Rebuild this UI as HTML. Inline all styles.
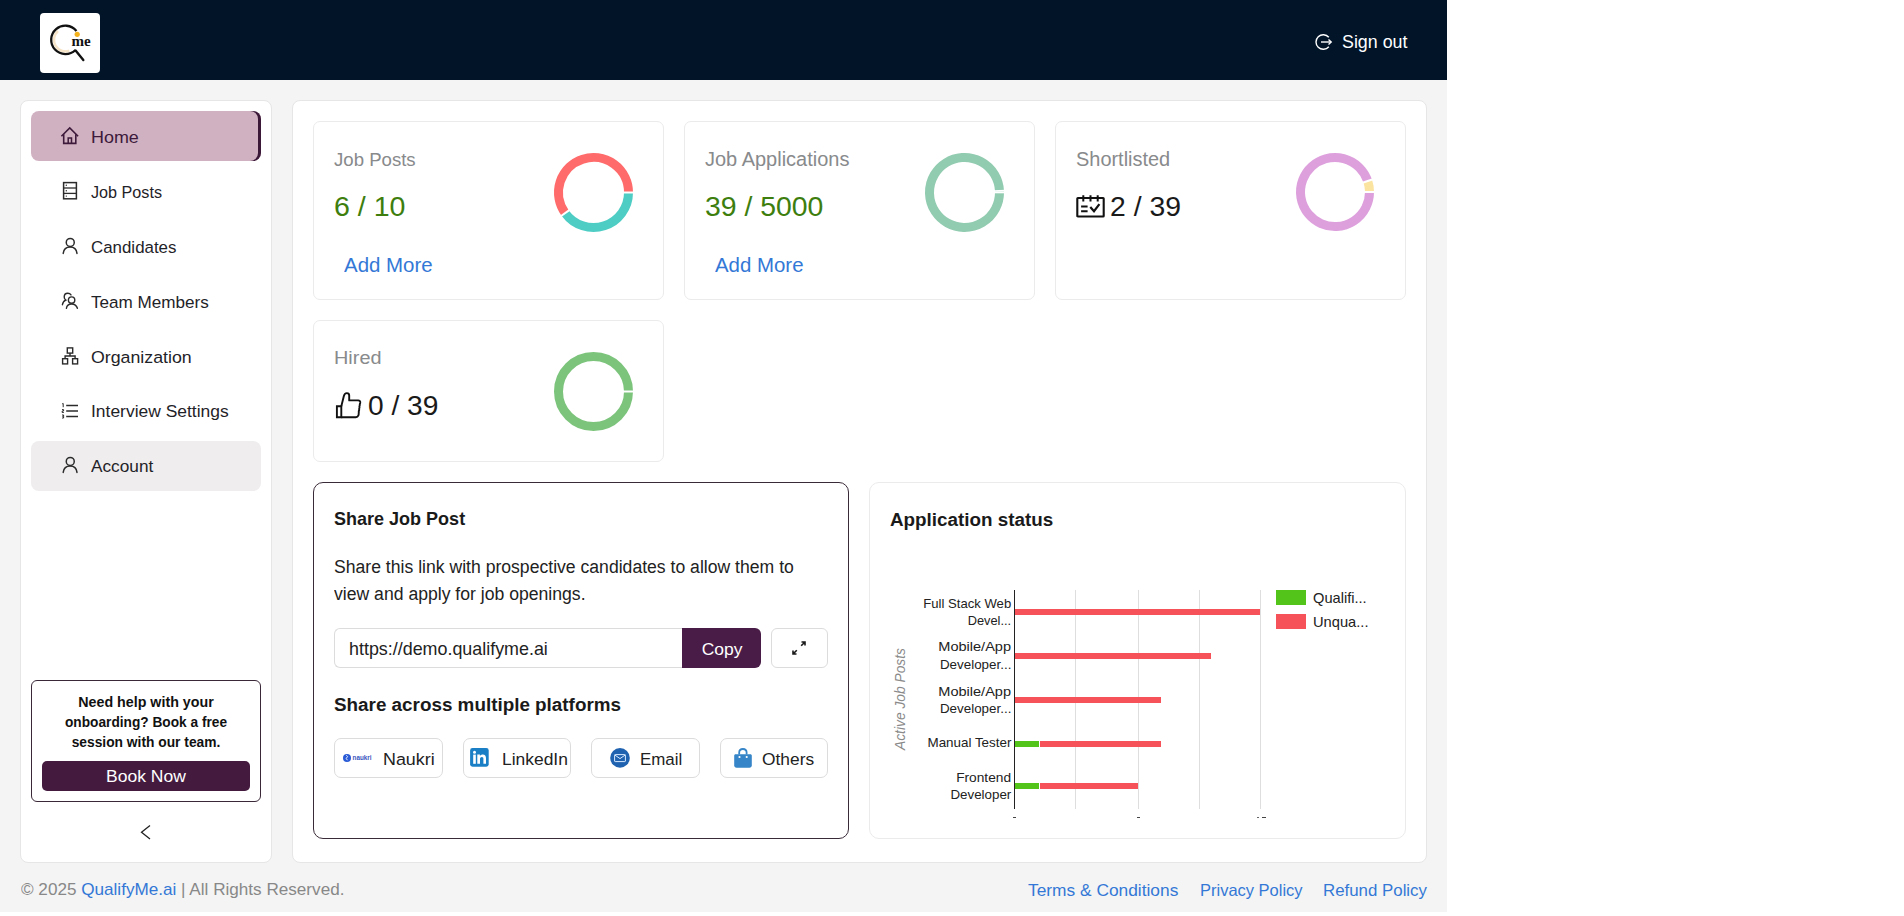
<!DOCTYPE html>
<html><head><meta charset="utf-8"><title>QualifyMe Dashboard</title>
<style>
html,body{margin:0;padding:0;background:#fff;}
body{width:1904px;height:916px;position:relative;overflow:hidden;font-family:"Liberation Sans", sans-serif;}
.r{position:absolute;display:block;}
.t{position:absolute;white-space:nowrap;font-family:"Liberation Sans", sans-serif;}
</style></head><body>
<div class="r" style="left:0px;top:0px;width:1447px;height:912px;background:#f4f4f4;"></div>
<div class="r" style="left:0px;top:0px;width:1447px;height:80px;background:#011428;"></div>
<div class="r" style="left:40px;top:13px;width:60px;height:60px;background:#fff;border-radius:4px;"></div>
<svg class="r" style="left:40px;top:13px;" width="60" height="60" viewBox="0 0 60 60">
<path d="M18 18.1 A11.5 11.5 0 0 0 29.3 37.7" fill="none" stroke="#f5e4c8" stroke-width="2.6"/>
<path d="M36.44 17.96 A14.2 14.2 0 1 0 35.44 36.94" fill="none" stroke="#111" stroke-width="2.3"/>
<line x1="35.6" y1="37.6" x2="43.3" y2="47" stroke="#111" stroke-width="2.4" stroke-linecap="round"/>
<circle cx="37.2" cy="21.3" r="2.6" fill="#f5b21a"/>
<text x="31.6" y="33" font-family="Liberation Serif" font-weight="700" font-size="14.5" fill="#111" textLength="19.2" lengthAdjust="spacingAndGlyphs">me</text>
</svg>
<svg class="r" style="left:1314px;top:32px;" width="20" height="20" viewBox="0 0 20 20">
<path d="M14.8 5.2 A7.3 7.3 0 1 0 14.8 14.8" fill="none" stroke="#fff" stroke-width="1.4"/>
<line x1="7" y1="10" x2="17" y2="10" stroke="#fff" stroke-width="1.4"/>
<path d="M14.5 7.6 L17.2 10 L14.5 12.4" fill="none" stroke="#fff" stroke-width="1.4"/>
</svg>
<div class="t" style="left:1342.3px;top:30.64px;font-size:17.5px;line-height:22px;color:#fff;font-weight:400;font-style:normal;transform:scaleX(1.0190);transform-origin:left center;">Sign out</div>
<div class="r" style="left:20px;top:100px;width:252px;height:763px;background:#fff;border:1px solid #e6e6e6;box-sizing:border-box;border-radius:8px;"></div>
<div class="r" style="left:31px;top:111px;width:230px;height:50px;background:#d0b1c1;border-radius:8px;box-shadow:inset -3px 0 0 #3b1838;"></div>
<div class="r" style="left:31px;top:441px;width:230px;height:50px;background:#efedee;border-radius:8px;"></div>
<svg class="r" style="left:60px;top:126px;" width="20" height="20" viewBox="0 0 20 20">
<path d="M1.4 10.2 L9.75 1.9 L18.1 10.2" fill="none" stroke="#3d1a3b" stroke-width="1.6" stroke-linejoin="miter"/>
<path d="M3.7 8.2 V17.4 H15.8 V8.2" fill="none" stroke="#3d1a3b" stroke-width="1.6"/>
<path d="M8.2 17.4 V12.1 H11.5 V17.4" fill="none" stroke="#3d1a3b" stroke-width="1.5"/>
</svg>
<div class="t" style="left:91px;top:125.84px;font-size:17.2px;line-height:22px;color:#3d1a3b;font-weight:400;font-style:normal;transform:scaleX(1.0432);transform-origin:left center;">Home</div>
<svg class="r" style="left:60px;top:180px;" width="20" height="22" viewBox="0 0 20 22">
<rect x="3.6" y="2.6" width="12.8" height="16.2" fill="none" stroke="#2b2b2b" stroke-width="1.5"/>
<line x1="3.6" y1="8" x2="16.4" y2="8" stroke="#2b2b2b" stroke-width="1.3"/>
<line x1="3.6" y1="13.4" x2="16.4" y2="13.4" stroke="#2b2b2b" stroke-width="1.3"/>
<circle cx="6.3" cy="5.3" r="0.7" fill="#2b2b2b"/><circle cx="6.3" cy="10.7" r="0.7" fill="#2b2b2b"/><circle cx="6.3" cy="16.1" r="0.7" fill="#2b2b2b"/>
</svg>
<div class="t" style="left:91px;top:180.84px;font-size:17.2px;line-height:22px;color:#1f2328;font-weight:400;font-style:normal;transform:scaleX(0.9413);transform-origin:left center;">Job Posts</div>
<svg class="r" style="left:59.5px;top:237px;" width="20" height="20" viewBox="0 0 20 20">
<circle cx="10.25" cy="5.45" r="4" fill="none" stroke="#2b2b2b" stroke-width="1.5"/>
<path d="M3.2 16.4 C3.7 12.2 6.3 10.1 10.2 10.1 C14.1 10.1 16.5 12.2 17 16.4" fill="none" stroke="#2b2b2b" stroke-width="1.5" stroke-linecap="round"/>
</svg>
<div class="t" style="left:91px;top:235.84px;font-size:17.2px;line-height:22px;color:#1f2328;font-weight:400;font-style:normal;transform:scaleX(0.9826);transform-origin:left center;">Candidates</div>
<svg class="r" style="left:59px;top:291px;" width="20" height="20" viewBox="0 0 20 20">
<path d="M12 3.9 C11.2 2.7 10 2.3 8.8 2.3 C6.6 2.3 5.2 3.9 5.2 5.9 C5.2 7.3 5.8 8.3 6.8 9 C5 9.7 3.8 11.6 3.4 13.7" fill="none" stroke="#2b2b2b" stroke-width="1.4" stroke-linecap="round"/>
<circle cx="12.6" cy="9.1" r="3.2" fill="#fff" stroke="#2b2b2b" stroke-width="1.4"/>
<path d="M7.4 17.3 C7.8 14.6 9.6 13 12.6 13 C15.6 13 17.6 14.6 18.4 17.3" fill="none" stroke="#2b2b2b" stroke-width="1.4" stroke-linecap="round"/>
</svg>
<div class="t" style="left:91px;top:290.64px;font-size:17.2px;line-height:22px;color:#1f2328;font-weight:400;font-style:normal;transform:scaleX(0.9949);transform-origin:left center;">Team Members</div>
<svg class="r" style="left:60px;top:346px;" width="20" height="20" viewBox="0 0 20 20">
<rect x="7.3" y="1.9" width="5.4" height="5.2" fill="none" stroke="#2b2b2b" stroke-width="1.4"/>
<path d="M10 7.1 V10 M5.1 12.7 V10 H15.1 V12.7" fill="none" stroke="#2b2b2b" stroke-width="1.4"/>
<rect x="2.6" y="12.7" width="5" height="5.2" fill="none" stroke="#2b2b2b" stroke-width="1.4"/>
<rect x="12.6" y="12.7" width="5" height="5.2" fill="none" stroke="#2b2b2b" stroke-width="1.4"/>
</svg>
<div class="t" style="left:91px;top:345.64px;font-size:17.2px;line-height:22px;color:#1f2328;font-weight:400;font-style:normal;transform:scaleX(1.0333);transform-origin:left center;">Organization</div>
<svg class="r" style="left:60px;top:401px;" width="20" height="20" viewBox="0 0 20 20">
<line x1="6.2" y1="4.5" x2="18" y2="4.5" stroke="#2b2b2b" stroke-width="1.5"/>
<line x1="6.2" y1="10" x2="18" y2="10" stroke="#2b2b2b" stroke-width="1.5"/>
<line x1="6.2" y1="15.5" x2="18" y2="15.5" stroke="#2b2b2b" stroke-width="1.5"/>
<path d="M2.2 2.8 L3.2 2.5 V6.2" fill="none" stroke="#2b2b2b" stroke-width="1"/>
<path d="M2 8.6 H3.6 V10 H2.2 V11.5 H3.8" fill="none" stroke="#2b2b2b" stroke-width="1"/>
<path d="M2 14 H3.6 V15.4 H2.4 M3.6 15.4 V17 H2" fill="none" stroke="#2b2b2b" stroke-width="1"/>
</svg>
<div class="t" style="left:91px;top:400.34px;font-size:17.2px;line-height:22px;color:#1f2328;font-weight:400;font-style:normal;transform:scaleX(1.0149);transform-origin:left center;">Interview Settings</div>
<svg class="r" style="left:59.5px;top:456px;" width="20" height="20" viewBox="0 0 20 20">
<circle cx="10.25" cy="5.45" r="4" fill="none" stroke="#2b2b2b" stroke-width="1.5"/>
<path d="M3.2 16.4 C3.7 12.2 6.3 10.1 10.2 10.1 C14.1 10.1 16.5 12.2 17 16.4" fill="none" stroke="#2b2b2b" stroke-width="1.5" stroke-linecap="round"/>
</svg>
<div class="t" style="left:91px;top:455.24px;font-size:17.2px;line-height:22px;color:#1f2328;font-weight:400;font-style:normal;transform:scaleX(1.0032);transform-origin:left center;">Account</div>
<div class="r" style="left:31px;top:680px;width:230px;height:122px;border:1px solid #3a2838;box-sizing:border-box;border-radius:6px;"></div>
<div class="t" style="left:-154px;width:600px;text-align:center;top:693.08px;font-size:14.2px;line-height:18px;color:#111;font-weight:700;font-style:normal;transform:scaleX(1.0052);transform-origin:center center;">Need help with your</div>
<div class="t" style="left:-154px;width:600px;text-align:center;top:713.08px;font-size:14.2px;line-height:18px;color:#111;font-weight:700;font-style:normal;transform:scaleX(0.9649);transform-origin:center center;">onboarding? Book a free</div>
<div class="t" style="left:-154px;width:600px;text-align:center;top:733.08px;font-size:14.2px;line-height:18px;color:#111;font-weight:700;font-style:normal;transform:scaleX(0.9724);transform-origin:center center;">session with our team.</div>
<div class="r" style="left:42px;top:761px;width:208px;height:30px;background:#441b3f;border-radius:5px;"></div>
<div class="t" style="left:-154px;width:600px;text-align:center;top:765.37px;font-size:17.4px;line-height:22px;color:#fff;font-weight:400;font-style:normal;transform:scaleX(1.0076);transform-origin:center center;">Book Now</div>
<svg class="r" style="left:138px;top:824px;" width="16" height="17" viewBox="0 0 16 17"><path d="M12 1.5 L3.5 8.2 L12 15" fill="none" stroke="#222" stroke-width="1.3"/></svg>
<div class="r" style="left:292px;top:100px;width:1135px;height:763px;background:#fff;border:1px solid #e6e6e6;box-sizing:border-box;border-radius:8px;"></div>
<div class="r" style="left:313px;top:121px;width:351px;height:179px;background:#fff;border:1px solid #ebebeb;box-sizing:border-box;border-radius:7px;"></div>
<div class="r" style="left:684px;top:121px;width:351px;height:179px;background:#fff;border:1px solid #ebebeb;box-sizing:border-box;border-radius:7px;"></div>
<div class="r" style="left:1055px;top:121px;width:351px;height:179px;background:#fff;border:1px solid #ebebeb;box-sizing:border-box;border-radius:7px;"></div>
<div class="r" style="left:313px;top:320px;width:351px;height:142px;background:#fff;border:1px solid #ebebeb;box-sizing:border-box;border-radius:7px;"></div>
<div class="t" style="left:334px;top:147.76px;font-size:18.6px;line-height:23px;color:#888a8c;font-weight:400;font-style:normal;transform:scaleX(1.0000);transform-origin:left center;">Job Posts</div>
<div class="t" style="left:334px;top:189.64px;font-size:27.6px;line-height:34px;color:#3d7e0e;font-weight:400;font-style:normal;transform:scaleX(1.0358);transform-origin:left center;">6 / 10</div>
<div class="t" style="left:344px;top:252.51px;font-size:19.6px;line-height:24px;color:#3378d6;font-weight:400;font-style:normal;transform:scaleX(1.0429);transform-origin:left center;">Add More</div>
<svg class="r" style="left:551.5px;top:150.5px;" width="83.0" height="83.0" viewBox="0 0 83.0 83.0"><path d="M76.50 41.50 A35.0 35.0 0 0 1 13.18 62.07" fill="none" stroke="#4ecdc4" stroke-width="9.0"/><path d="M13.18 62.07 A35.0 35.0 0 1 1 76.50 41.50" fill="none" stroke="#ff6b6b" stroke-width="9.0"/><line x1="71.00" y1="41.50" x2="82.00" y2="41.50" stroke="#fff" stroke-width="2"/><line x1="17.63" y1="58.84" x2="8.73" y2="65.31" stroke="#fff" stroke-width="2"/></svg>
<div class="t" style="left:705px;top:146.91px;font-size:19.6px;line-height:24px;color:#888a8c;font-weight:400;font-style:normal;transform:scaleX(1.0199);transform-origin:left center;">Job Applications</div>
<div class="t" style="left:705px;top:189.07px;font-size:27.8px;line-height:35px;color:#3d7e0e;font-weight:400;font-style:normal;transform:scaleX(1.0211);transform-origin:left center;">39 / 5000</div>
<div class="t" style="left:715px;top:252.51px;font-size:19.6px;line-height:24px;color:#3378d6;font-weight:400;font-style:normal;transform:scaleX(1.0417);transform-origin:left center;">Add More</div>
<svg class="r" style="left:922.5px;top:150.5px;" width="83.0" height="83.0" viewBox="0 0 83.0 83.0"><path d="M76.50 41.50 A35.0 35.0 0 1 1 76.46 39.79" fill="none" stroke="#91cbb0" stroke-width="9.0"/><path d="M76.46 39.79 A35.0 35.0 0 0 1 76.50 41.50" fill="none" stroke="#c9e8da" stroke-width="9.0"/><line x1="71.00" y1="41.50" x2="82.00" y2="41.50" stroke="#fff" stroke-width="1.6"/><line x1="70.96" y1="40.06" x2="81.95" y2="39.52" stroke="#fff" stroke-width="1.6"/></svg>
<div class="t" style="left:1076px;top:146.98px;font-size:19.4px;line-height:24px;color:#888a8c;font-weight:400;font-style:normal;transform:scaleX(1.0278);transform-origin:left center;">Shortlisted</div>
<svg class="r" style="left:1075px;top:194px;" width="31" height="25" viewBox="0 0 31 25">
<rect x="2.3" y="4" width="26.4" height="18.5" rx="0.6" fill="none" stroke="#111" stroke-width="2.1"/>
<path d="M8.3 1.3 V7.4 M15.5 1.3 V7.4 M22.7 1.3 V7.4" stroke="#111" stroke-width="2"/>
<path d="M6.1 12.6 H12.6 M6.1 17.2 H12.6" stroke="#111" stroke-width="2"/>
<path d="M15.3 13 L19 17.2 L24.4 10.2" fill="none" stroke="#111" stroke-width="2.2"/>
</svg>
<div class="t" style="left:1110px;top:189.54px;font-size:27.6px;line-height:34px;color:#1a1a1a;font-weight:400;font-style:normal;transform:scaleX(1.0269);transform-origin:left center;">2 / 39</div>
<svg class="r" style="left:1293.8px;top:150.6px;" width="82" height="82" viewBox="0 0 82 82"><path d="M75.50 41.00 A34.5 34.5 0 1 1 73.72 30.05" fill="none" stroke="#dda0dd" stroke-width="9"/><path d="M73.72 30.05 A34.5 34.5 0 0 1 75.50 41.00" fill="none" stroke="#fbe3a0" stroke-width="9"/><line x1="70.00" y1="41.00" x2="81.00" y2="41.00" stroke="#fff" stroke-width="2"/><line x1="68.50" y1="31.80" x2="78.93" y2="28.31" stroke="#fff" stroke-width="2"/></svg>
<div class="t" style="left:334px;top:346.15px;font-size:19.2px;line-height:24px;color:#888a8c;font-weight:400;font-style:normal;transform:scaleX(1.0364);transform-origin:left center;">Hired</div>
<svg class="r" style="left:334px;top:391px;" width="28" height="29" viewBox="0 0 28 29">
<path d="M2.9 15.3 H7.3 V26.2 H2.9 Z" fill="none" stroke="#111" stroke-width="1.9"/>
<path d="M7.3 15.3 L9.8 5.2 C10.3 3 11.5 2.1 12.9 2.1 C14.3 2.1 15.2 3.1 15.2 4.6 V9.4 H24.2 C25.6 9.4 26.6 10.5 26.2 12 C25.9 13 25.6 13.3 25.8 14.2 C25.4 15 25.2 15.6 25.5 16.6 C25.1 17.4 25 18 25.2 19 C24.8 19.8 24.6 20.5 24.8 21.4 C24.6 22.5 24.8 23.6 24.4 24.4 C23.9 25.6 23.1 26.2 21.8 26.2 H7.3" fill="none" stroke="#111" stroke-width="1.9" stroke-linejoin="round"/>
</svg>
<div class="t" style="left:368px;top:389.04px;font-size:27.6px;line-height:34px;color:#1a1a1a;font-weight:400;font-style:normal;transform:scaleX(1.0194);transform-origin:left center;">0 / 39</div>
<svg class="r" style="left:551.5px;top:349.5px;" width="83.0" height="83.0" viewBox="0 0 83.0 83.0"><circle cx="41.5" cy="41.5" r="35.0" fill="none" stroke="#7cc47c" stroke-width="9.0"/><line x1="71.00" y1="41.50" x2="82.00" y2="41.50" stroke="#fff" stroke-width="2"/></svg>
<div class="r" style="left:313px;top:482px;width:536px;height:357px;background:#fff;border:1px solid #3a2b38;box-sizing:border-box;border-radius:10px;"></div>
<div class="t" style="left:334px;top:507.83px;font-size:18.1px;line-height:23px;color:#1a1a1a;font-weight:700;font-style:normal;transform:scaleX(0.9955);transform-origin:left center;">Share Job Post</div>
<div class="t" style="left:334px;top:556.40px;font-size:17.6px;line-height:22px;color:#222;font-weight:400;font-style:normal;transform:scaleX(1.0004);transform-origin:left center;">Share this link with prospective candidates to allow them to</div>
<div class="t" style="left:334px;top:583.30px;font-size:17.6px;line-height:22px;color:#222;font-weight:400;font-style:normal;transform:scaleX(1.0008);transform-origin:left center;">view and apply for job openings.</div>
<div class="r" style="left:334px;top:628px;width:356px;height:40px;border:1px solid #dcdcdc;border-right:none;box-sizing:border-box;border-radius:6px 0 0 6px;"></div>
<div class="t" style="left:349px;top:637.87px;font-size:17.7px;line-height:22px;color:#222;font-weight:400;font-style:normal;transform:scaleX(1.0113);transform-origin:left center;">https://demo.qualifyme.ai</div>
<div class="r" style="left:682px;top:628px;width:79px;height:40px;background:#481c46;border-radius:0 6px 6px 0;"></div>
<div class="t" style="left:421.5px;width:600px;text-align:center;top:638.04px;font-size:17.2px;line-height:22px;color:#fff;font-weight:400;font-style:normal;transform:scaleX(1.0154);transform-origin:center center;">Copy</div>
<div class="r" style="left:771px;top:628px;width:57px;height:40px;border:1px solid #dcdcdc;box-sizing:border-box;border-radius:6px;"></div>
<svg class="r" style="left:789px;top:638px;" width="20" height="20" viewBox="0 0 20 20">
<path d="M12.5 4 H16 V7.5 M16 4 L12.2 7.8" fill="none" stroke="#1a1a1a" stroke-width="1.6"/>
<path d="M7.5 16 H4 V12.5 M4 16 L7.8 12.2" fill="none" stroke="#1a1a1a" stroke-width="1.6"/>
</svg>
<div class="t" style="left:334px;top:692.62px;font-size:18.7px;line-height:23px;color:#1a1a1a;font-weight:700;font-style:normal;transform:scaleX(1.0085);transform-origin:left center;">Share across multiple platforms</div>
<div class="r" style="left:334px;top:738px;width:109px;height:40px;border:1px solid #dcdcdc;box-sizing:border-box;border-radius:7px;"></div>
<div class="r" style="left:463px;top:738px;width:108px;height:40px;border:1px solid #dcdcdc;box-sizing:border-box;border-radius:7px;"></div>
<div class="r" style="left:591px;top:738px;width:109px;height:40px;border:1px solid #dcdcdc;box-sizing:border-box;border-radius:7px;"></div>
<div class="r" style="left:720px;top:738px;width:108px;height:40px;border:1px solid #dcdcdc;box-sizing:border-box;border-radius:7px;"></div>
<svg class="r" style="left:342px;top:753px;" width="32" height="10" viewBox="0 0 32 10">
<circle cx="5" cy="5" r="4" fill="#2a5bd6"/>
<path d="M4.3 2.2 L5.6 3.6 L4.2 5.4 L5.4 7.2" fill="none" stroke="#fff" stroke-width="0.9"/>
<text x="10.6" y="7" font-family="Liberation Sans" font-weight="700" font-size="7" fill="#3a56c0" textLength="19" lengthAdjust="spacingAndGlyphs">naukri</text>
</svg>
<div class="t" style="left:383px;top:747.84px;font-size:17.2px;line-height:22px;color:#222;font-weight:400;font-style:normal;transform:scaleX(1.0396);transform-origin:left center;">Naukri</div>
<svg class="r" style="left:470px;top:747px;" width="20" height="20" viewBox="0 0 20 20">
<rect x="0.1" y="1.1" width="18.6" height="18.6" rx="2.4" fill="#1b7fc6"/>
<rect x="3.2" y="7.6" width="2.6" height="9.2" fill="#fff"/>
<circle cx="4.5" cy="5.15" r="1.5" fill="#fff"/>
<path d="M7.3 16.8 V7.6 H9.9 V8.9 C10.5 7.9 11.6 7.4 12.8 7.4 C15 7.4 16 8.8 16 11.2 V16.8 H13.4 V11.8 C13.4 10.6 12.9 9.9 11.9 9.9 C10.8 9.9 10 10.7 10 11.9 V16.8 Z" fill="#fff"/>
</svg>
<div class="t" style="left:502px;top:747.84px;font-size:17.2px;line-height:22px;color:#222;font-weight:400;font-style:normal;transform:scaleX(1.0143);transform-origin:left center;">LinkedIn</div>
<svg class="r" style="left:609px;top:747px;" width="22" height="22" viewBox="0 0 22 22">
<circle cx="11" cy="10.9" r="9.8" fill="#1f62b0"/>
<rect x="5.6" y="7.6" width="10.8" height="7" rx="0.6" fill="none" stroke="#d8ebff" stroke-width="1"/>
<path d="M5.8 8 L11 11.6 L16.2 8" fill="none" stroke="#d8ebff" stroke-width="1"/>
</svg>
<div class="t" style="left:640px;top:747.84px;font-size:17.2px;line-height:22px;color:#222;font-weight:400;font-style:normal;transform:scaleX(0.9829);transform-origin:left center;">Email</div>
<svg class="r" style="left:733px;top:746px;" width="20" height="23" viewBox="0 0 20 23">
<path d="M6.2 8.6 V6.6 C6.2 4.2 7.8 3 9.9 3 C12 3 13.6 4.2 13.6 6.6 V8.6" fill="none" stroke="#3585c8" stroke-width="1.8"/>
<path d="M2.6 8.3 H17.4 C18.2 8.3 18.8 8.9 18.8 9.7 V19.2 C18.8 20.7 17.9 21.7 16.4 21.7 H3.6 C2.1 21.7 1.2 20.7 1.2 19.2 V9.7 C1.2 8.9 1.8 8.3 2.6 8.3 Z" fill="#3585c8"/>
<circle cx="6.5" cy="11" r="1.1" fill="#fff"/><circle cx="13.7" cy="11" r="1.1" fill="#fff"/>
</svg>
<div class="t" style="left:762px;top:747.84px;font-size:17.2px;line-height:22px;color:#222;font-weight:400;font-style:normal;transform:scaleX(1.0100);transform-origin:left center;">Others</div>
<div class="r" style="left:869px;top:482px;width:537px;height:357px;background:#fff;border:1px solid #ebebeb;box-sizing:border-box;border-radius:7px;border-radius:10px;"></div>
<div class="t" style="left:890px;top:507.72px;font-size:18.7px;line-height:23px;color:#1a1a1a;font-weight:700;font-style:normal;transform:scaleX(1.0075);transform-origin:left center;">Application status</div>
<div class="r" style="left:1075.1px;top:590px;width:1.0px;height:219px;background:#dedede;"></div>
<div class="r" style="left:1137.5px;top:590px;width:1.0px;height:219px;background:#dedede;"></div>
<div class="r" style="left:1199.0px;top:590px;width:1.0px;height:219px;background:#dedede;"></div>
<div class="r" style="left:1260.1px;top:590px;width:1.0px;height:219px;background:#dedede;"></div>
<div class="r" style="left:1013.5px;top:590px;width:1.5px;height:219px;background:#222;"></div>
<div class="r" style="left:1015px;top:609px;width:245px;height:6px;background:#f6525a;"></div>
<div class="r" style="left:1015px;top:653px;width:196px;height:6px;background:#f6525a;"></div>
<div class="r" style="left:1015px;top:697px;width:146px;height:6px;background:#f6525a;"></div>
<div class="r" style="left:1015px;top:740.5px;width:24px;height:6.0px;background:#52c41a;"></div>
<div class="r" style="left:1040px;top:740.5px;width:121px;height:6.0px;background:#f6525a;"></div>
<div class="r" style="left:1015px;top:783px;width:24px;height:6px;background:#52c41a;"></div>
<div class="r" style="left:1040px;top:783px;width:97.5px;height:6px;background:#f6525a;"></div>
<div class="r" style="left:1013.0px;top:816.5px;width:3.0px;height:1.5px;background:#444;"></div>
<div class="r" style="left:1136.5px;top:816.5px;width:3.0px;height:1.5px;background:#444;"></div>
<div class="r" style="left:1257px;top:816.5px;width:1.5px;height:1.5px;background:#666;"></div>
<div class="r" style="left:1262px;top:816.5px;width:4px;height:1.5px;background:#444;"></div>
<div class="t" style="right:893px;top:596.00px;font-size:13px;line-height:16px;color:#222;font-weight:400;font-style:normal;transform:scaleX(1.0081);transform-origin:right center;">Full Stack Web</div>
<div class="t" style="right:893px;top:613.10px;font-size:13px;line-height:16px;color:#222;font-weight:400;font-style:normal;transform:scaleX(0.9857);transform-origin:right center;">Devel...</div>
<div class="t" style="right:893px;top:639.30px;font-size:13px;line-height:16px;color:#222;font-weight:400;font-style:normal;transform:scaleX(1.1187);transform-origin:right center;">Mobile/App</div>
<div class="t" style="right:893px;top:656.90px;font-size:13px;line-height:16px;color:#222;font-weight:400;font-style:normal;transform:scaleX(1.0294);transform-origin:right center;">Developer...</div>
<div class="t" style="right:893px;top:683.50px;font-size:13px;line-height:16px;color:#222;font-weight:400;font-style:normal;transform:scaleX(1.1187);transform-origin:right center;">Mobile/App</div>
<div class="t" style="right:893px;top:700.50px;font-size:13px;line-height:16px;color:#222;font-weight:400;font-style:normal;transform:scaleX(1.0294);transform-origin:right center;">Developer...</div>
<div class="t" style="right:893px;top:735.10px;font-size:13px;line-height:16px;color:#222;font-weight:400;font-style:normal;transform:scaleX(1.0309);transform-origin:right center;">Manual Tester</div>
<div class="t" style="right:893px;top:770.00px;font-size:13px;line-height:16px;color:#222;font-weight:400;font-style:normal;transform:scaleX(1.0549);transform-origin:right center;">Frontend</div>
<div class="t" style="right:893px;top:786.50px;font-size:13px;line-height:16px;color:#222;font-weight:400;font-style:normal;transform:scaleX(1.0271);transform-origin:right center;">Developer</div>
<div class="t" style="left:850.7px;top:692px;width:100px;height:16px;line-height:16px;text-align:center;font-size:13.8px;font-style:italic;color:#8a8a8a;transform:rotate(-90deg);">Active Job Posts</div>
<div class="r" style="left:1276px;top:590px;width:30px;height:15px;background:#52c41a;"></div>
<div class="r" style="left:1276px;top:614px;width:30px;height:15px;background:#f6525a;"></div>
<div class="t" style="left:1313px;top:589.08px;font-size:14.2px;line-height:18px;color:#222;font-weight:400;font-style:normal;transform:scaleX(1.0314);transform-origin:left center;">Qualifi...</div>
<div class="t" style="left:1313px;top:613.08px;font-size:14.2px;line-height:18px;color:#222;font-weight:400;font-style:normal;transform:scaleX(1.0346);transform-origin:left center;">Unqua...</div>
<div class="t" style="left:21px;top:878.81px;font-size:17px;line-height:21px;color:#888;font-weight:400;font-style:normal;transform:scaleX(1.0069);transform-origin:left center;">© 2025 <span style="color:#3378d6">QualifyMe.ai</span> | All Rights Reserved.</div>
<div class="t" style="left:1028px;top:879.01px;font-size:17.3px;line-height:22px;color:#3378d6;font-weight:400;font-style:normal;transform:scaleX(1.0033);transform-origin:left center;">Terms &amp; Conditions</div>
<div class="t" style="left:1200px;top:879.78px;font-size:16.5px;line-height:21px;color:#3378d6;font-weight:400;font-style:normal;transform:scaleX(0.9990);transform-origin:left center;">Privacy Policy</div>
<div class="t" style="left:1323px;top:879.71px;font-size:16.7px;line-height:21px;color:#3378d6;font-weight:400;font-style:normal;transform:scaleX(1.0098);transform-origin:left center;">Refund Policy</div>
</body></html>
